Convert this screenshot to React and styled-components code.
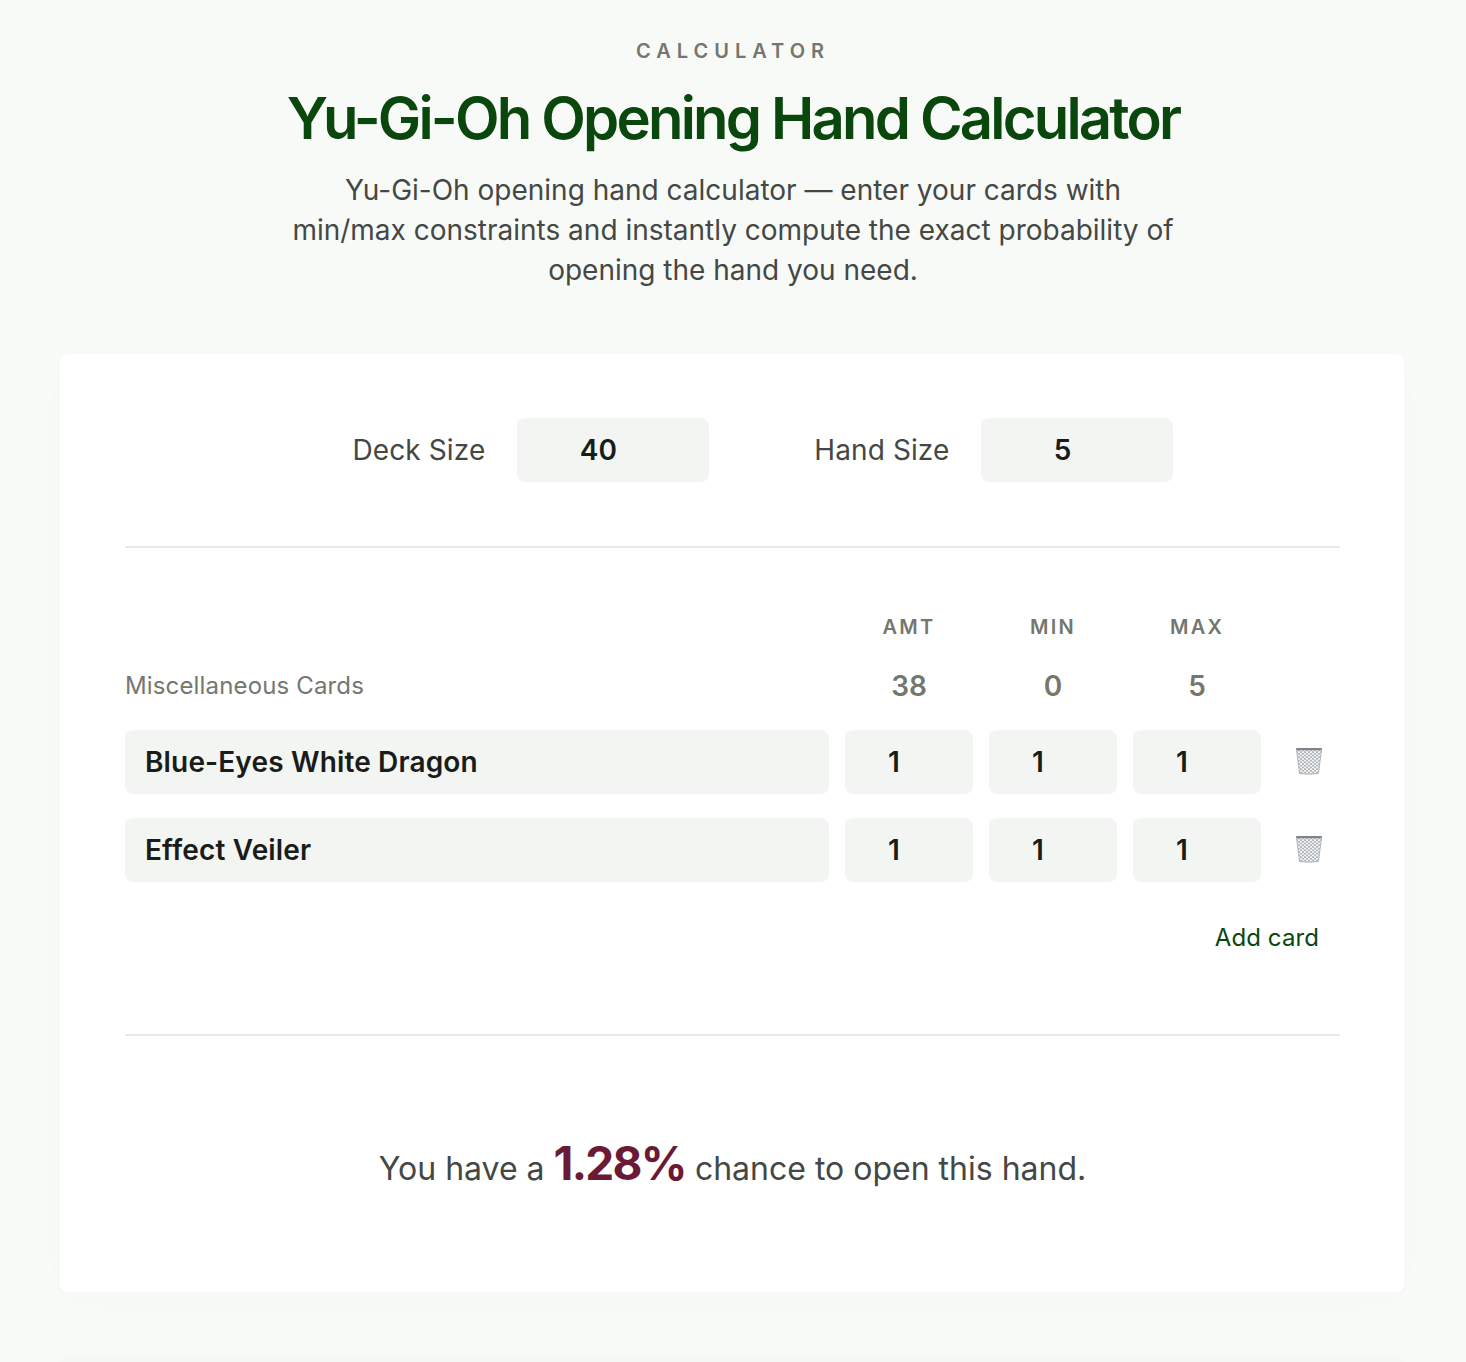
import React from "react";
import styled, { createGlobalStyle } from "styled-components";

const Global = createGlobalStyle`
  html, body { margin: 0; padding: 0; background: #f8faf7; }
  body {
    font-family: Inter, "Noto Sans", sans-serif;
    color: #444845;
    height: 1362px;
    overflow: hidden;
  }
  input::-webkit-outer-spin-button, input::-webkit-inner-spin-button { -webkit-appearance: none; margin: 0; }
`;

const Page = styled.main`
  width: 1344px;
  margin: 0 0 0 60px;
  padding-top: 40px;
`;
const Header = styled.header`
  display: flex;
  flex-direction: column;
  align-items: center;
  text-align: center;
  margin-bottom: 64px;
  padding-left: 2px;
`;
const Eyebrow = styled.div`
  font-size: 20px;
  line-height: 22px;
  font-weight: 600;
  letter-spacing: 6px;
  color: #75776f;
  margin-right: 0;
`;
const Title = styled.h1`
  margin: 20px 0 0;
  font-size: 58px;
  line-height: 72px;
  font-weight: 600;
  letter-spacing: -2.8px;
  color: #0a470c;
`;
const Intro = styled.p`
  margin: 16px 0 0;
  width: 885px;
  font-size: 28px;
  line-height: 40px;
  color: #444845;
`;
const Card = styled.section`
  background: #fff;
  border-radius: 8px;
  padding: 64px 64px 0 65px;
  height: 938px;
  box-sizing: border-box;
  box-shadow: 0 8px 40px rgba(40, 50, 40, 0.012);
`;
const SizeRow = styled.div`
  display: flex;
  justify-content: center;
  gap: 105px;
  padding-left: 61px;
  padding-bottom: 64px;
  border-bottom: 2px solid #e9ebe8;
`;
const SizeGroup = styled.label`
  display: flex;
  align-items: center;
  gap: 32px;
  font-size: 28px;
  letter-spacing: 0.1px;
  color: #444845;
`;
const Field = styled.input`
  box-sizing: border-box;
  width: ${(p) => p.$w || "100%"};
  height: 64px;
  border: 0;
  border-radius: 8px;
  background: #f3f5f2;
  font-family: inherit;
  font-size: 28px;
  font-weight: 600;
  color: #1a1c1a;
  text-align: center;
  padding: 0 30px 0 0;
  outline: none;
`;
const NameField = styled(Field)`
  text-align: left;
  padding: 0 20px;
  letter-spacing: 0.15px;
`;
const Grid = styled.div`
  display: grid;
  grid-template-columns: 1fr 128px 128px 128px 63px;
  column-gap: 16px;
  align-items: center;
  margin-bottom: ${(p) => p.$mb || 24}px;
`;
const ColHead = styled.div`
  text-align: center;
  font-size: 20px;
  font-weight: 600;
  letter-spacing: 2.2px;
  color: #75776f;
`;
const MiscLabel = styled.div`
  font-size: 24px;
  color: #75776f;
  letter-spacing: 0.15px;
  padding-bottom: 2px;
`;
const MiscValue = styled.div`
  text-align: center;
  font-size: 28px;
  font-weight: 600;
  color: #75776f;
`;
const Cards = styled.div`
  padding: 67px 0 0;
`;
const TrashButton = styled.button`
  display: flex;
  justify-content: center;
  align-items: center;
  background: none;
  border: 0;
  padding: 0 0 2px;
`;
const Actions = styled.div`
  display: flex;
  justify-content: flex-end;
  padding: 12px 21px 76px 0;
  border-bottom: 2px solid #e9ebe8;
`;
const AddButton = styled.button`
  background: none;
  border: 0;
  padding: 0;
  font-family: inherit;
  font-size: 24px;
  line-height: 40px;
  letter-spacing: 0.1px;
  color: #0a470c;
`;
const Result = styled.p`
  margin: 0;
  padding-top: 95px;
  text-align: center;
  font-size: 32px;
  line-height: 64px;
  color: #444845;
`;
const Percent = styled.strong`
  font-size: 46px;
  font-weight: 700;
  color: #6b1a36;
  letter-spacing: -1.7px;
`;
const NextCard = styled.div`
  margin-top: 64px;
  height: 60px;
  background: #f6f8f5;
  border-radius: 8px;
`;

let uid = 0;
const Trash = () => {
  const id = `mesh${uid++}`;
  return (
    <svg width="28" height="28" viewBox="0 0 28 28" aria-hidden="true">
      <defs>
        <pattern id={id} width="4" height="3.4" patternUnits="userSpaceOnUse">
          <rect width="4" height="3.4" fill="#f4f5f6" />
          <path d="M0 0L2 1.7L4 0M0 3.4L2 1.7L4 3.4" stroke="#9aa0a5" strokeWidth="0.7" fill="none" />
        </pattern>
      </defs>
      <path d="M1.5 2.5H26.5L23.5 26.5Q14 28 4.5 26.5Z" fill={`url(#${id})`} />
      <path d="M1.5 2.5H26.5L23.5 26.5Q14 28 4.5 26.5Z" fill="none" stroke="#a5aaae" strokeWidth="0.8" />
      <rect x="1" y="1" width="26" height="2.2" rx="1" fill="#7f8589" />
    </svg>
  );
};

const rows = ["Blue-Eyes White Dragon", "Effect Veiler"];

export default function App() {
  return (
    <>
      <Global />
      <Page>
        <Header>
          <Eyebrow>CALCULATOR</Eyebrow>
          <Title>Yu-Gi-Oh Opening Hand Calculator</Title>
          <Intro>
            Yu-Gi-Oh opening hand calculator — enter your cards with min/max constraints and instantly compute the exact
            probability of opening the hand you need.
          </Intro>
        </Header>
        <Card>
          <SizeRow>
            <SizeGroup>
              Deck Size
              <Field $w="192px" type="number" defaultValue="40" />
            </SizeGroup>
            <SizeGroup>
              Hand Size
              <Field $w="192px" type="number" defaultValue="5" />
            </SizeGroup>
          </SizeRow>
          <Cards>
            <Grid $mb={30}>
              <span />
              <ColHead>AMT</ColHead>
              <ColHead>MIN</ColHead>
              <ColHead>MAX</ColHead>
              <span />
            </Grid>
            <Grid $mb={27}>
              <MiscLabel>Miscellaneous Cards</MiscLabel>
              <MiscValue>38</MiscValue>
              <MiscValue>0</MiscValue>
              <MiscValue>5</MiscValue>
              <span />
            </Grid>
            {rows.map((name) => (
              <Grid key={name}>
                <NameField type="text" defaultValue={name} />
                <Field type="number" defaultValue="1" />
                <Field type="number" defaultValue="1" />
                <Field type="number" defaultValue="1" />
                <TrashButton aria-label="Delete card">
                  <Trash />
                </TrashButton>
              </Grid>
            ))}
          </Cards>
          <Actions>
            <AddButton>Add card</AddButton>
          </Actions>
          <Result>
            You have a <Percent>1.28%</Percent> chance to open this hand.
          </Result>
        </Card>
        <NextCard />
      </Page>
    </>
  );
}
